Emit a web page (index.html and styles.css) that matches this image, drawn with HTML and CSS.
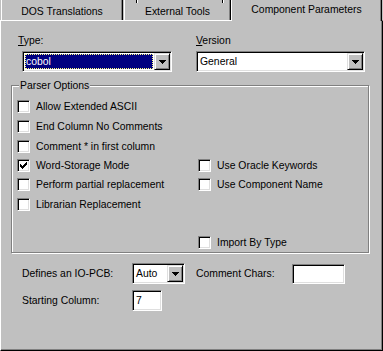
FILE: index.html
```html
<!DOCTYPE html>
<html lang="en">
<head>
    <meta charset="UTF-8">
    <title>Component Parameters</title>
    <link rel="stylesheet" href="styles.css">
</head>
<body>
    <div class="dialog">
        <div class="tabs">
            <div class="tab tab-dos">DOS Translations</div>
            <div class="tab tab-ext">External Tools</div>
            <div class="tab tab-active">Component Parameters</div>
        </div>

        <div class="panel">
            <div class="top-fields">
                <div class="field field-type">
                    <div class="label"><u>T</u>ype:</div>
                    <div class="combo combo-type">
                        <div class="combo-value selected">cobol</div>
                        <div class="combo-btn">
                            <svg width="7" height="4" viewBox="0 0 7 4"><path d="M0 0h7v1h-1v1h-1v1h-1v1h-1v-1h-1v-1h-1v-1h-1z"/></svg>
                        </div>
                    </div>
                </div>
                <div class="field field-version">
                    <div class="label"><u>V</u>ersion</div>
                    <div class="combo combo-version">
                        <div class="combo-value">General</div>
                        <div class="combo-btn">
                            <svg width="7" height="4" viewBox="0 0 7 4"><path d="M0 0h7v1h-1v1h-1v1h-1v1h-1v-1h-1v-1h-1v-1h-1z"/></svg>
                        </div>
                    </div>
                </div>
            </div>

            <!-- Parser Options group -->
            <div class="group">
                <span class="group-title">Parser Options</span>
                <div class="options">
                    <div class="check"><span class="box"></span>Allow Extended ASCII</div>
                    <div class="check"><span class="box"></span>End Column No Comments</div>
                    <div class="check"><span class="box"></span>Comment * in first column</div>
                    <div class="check"><span class="box"><svg width="7" height="7" viewBox="0 0 7 7"><path d="M6 0h1v1h-1zM5 1h2v1h-2zM0 2h1v1h-1zM4 2h3v1h-3zM0 3h2v1h-2zM3 3h3v1h-3zM0 4h5v1h-5zM1 5h3v1h-3zM2 6h1v1h-1z"/></svg></span>Word-Storage Mode</div>
                    <div class="check right row-4"><span class="box"></span>Use Oracle Keywords</div>
                    <div class="check"><span class="box"></span>Perform partial replacement</div>
                    <div class="check right row-5"><span class="box"></span>Use Component Name</div>
                    <div class="check"><span class="box"></span>Librarian Replacement</div>
                    <div class="check right row-8"><span class="box"></span>Import By Type</div>
                </div>
            </div>

            <div class="bottom-fields">
                <div class="label">Defines an IO-PCB:</div>
                <div class="combo combo-auto">
                    <div class="combo-value">Auto</div>
                    <div class="combo-btn">
                        <svg width="7" height="4" viewBox="0 0 7 4"><path d="M0 0h7v1h-1v1h-1v1h-1v1h-1v-1h-1v-1h-1v-1h-1z"/></svg>
                    </div>
                </div>
                <div class="label">Comment Chars:</div>
                <div class="textbox textbox-comment"></div>
                <div class="label">Starting Column:</div>
                <div class="textbox textbox-start">7</div>
            </div>
        </div>
    </div>
</body>
</html>
```

FILE: styles.css
```css
body {
    margin: 0;
    background-color: #c0c0c0;
    font-family: "Liberation Sans", Arial, sans-serif;
    font-size: 10.4px;
    color: #000;
}

.dialog {
    width: 383px;
    height: 351px;
}

/* Tabs */
.tabs {
    display: flex;
    height: 20px;
    padding-left: 1px;
}

.tab {
    box-sizing: border-box;
    height: 20px;
    border-left: 1px solid #fff;
    border-right: 1px solid #000;
    box-shadow: inset -1px 0 #808080;
    text-align: center;
    padding-top: 6px;
    line-height: 12px;
    white-space: nowrap;
}

.tab-dos {
    width: 122px;
}

.tab-ext {
    position: relative;
    width: 107px;
    margin-left: 1px;
}

/* edges of the tab row behind, cut off at the top */
.tab-ext::before,
.tab-ext::after {
    content: "";
    position: absolute;
    top: 0;
    width: 1px;
    height: 3px;
    background-color: #000;
    box-shadow: 1px 0 #fff;
}

.tab-ext::before {
    left: 11px;
}

.tab-ext::after {
    left: 97px;
}

.tab-active {
    width: 151px;
    height: 21px;
    padding-top: 4px;
    position: relative;
    z-index: 1;
    background-color: #c0c0c0;
}

/* Page panel */
.panel {
    box-sizing: border-box;
    height: 331px;
    border-top: 1px solid #fff;
    border-left: 1px solid #fff;
    border-right: 1px solid #000;
    border-bottom: 1px solid #000;
    box-shadow: inset -1px -1px #808080;
    padding-top: 13px;
}

.label {
    line-height: 13px;
    white-space: nowrap;
}

.top-fields {
    display: flex;
    padding-left: 17px;
}

.field-type {
    width: 178px;
}

/* Sunken fields */
.combo,
.textbox,
.box {
    box-sizing: border-box;
    border: 1px solid;
    border-color: #808080 #fff #fff #808080;
    box-shadow: inset 1px 1px #000, inset -1px -1px #dfdfdf;
    background-color: #fff;
}

.combo {
    display: flex;
    height: 21px;
    padding: 1px;
}

.top-fields .combo {
    margin-top: 4px;
}

.combo-type {
    width: 150px;
    margin-left: 4px;
}

.combo-version {
    width: 169px;
}

.combo-value {
    flex: 1;
    margin: 1px;
    padding-left: 1px;
    line-height: 15px;
}

.combo-value.selected {
    background-color: #000080;
    color: #fff;
    outline: 1px dotted #ffff80;
    outline-offset: -1px;
}

.combo-btn {
    box-sizing: border-box;
    width: 16px;
    border: 1px solid;
    border-color: #dfdfdf #000 #000 #dfdfdf;
    box-shadow: inset 1px 1px #fff, inset -1px -1px #808080;
    background-color: #c0c0c0;
    display: flex;
    justify-content: center;
    align-items: center;
}

.combo-btn svg {
    display: block;
}

/* Group box */
.group {
    position: relative;
    box-sizing: border-box;
    width: 358px;
    height: 168px;
    margin: 13px 0 0 10px;
    padding: 10px 0 0 5px;
    border: 1px solid #808080;
    box-shadow: inset 1px 1px #fff, 1px 1px #fff;
}

.group-title {
    position: absolute;
    top: -7px;
    left: 7px;
    padding: 0 1px;
    line-height: 13px;
    background-color: #c0c0c0;
}

.options {
    display: grid;
    grid-template-columns: 181px auto;
    grid-template-rows: 20px 20px 20px 19px 19px 20px 19px 19px;
}

.check {
    grid-column: 1;
    display: flex;
    align-items: center;
    gap: 6px;
    white-space: nowrap;
}

.check.right {
    grid-column: 2;
}

.row-4 { grid-row: 4; }
.row-5 { grid-row: 5; }
.row-8 { grid-row: 8; }

.box {
    width: 13px;
    height: 13px;
    display: flex;
    justify-content: center;
    align-items: center;
}

.box svg {
    display: block;
}

/* Bottom fields */
.bottom-fields {
    display: grid;
    grid-template-columns: 110px 64px 96px auto;
    grid-template-rows: 21px 21px;
    row-gap: 6px;
    margin-top: 10px;
    padding-left: 21px;
    align-items: center;
}

.combo-auto {
    width: 53px;
}

.textbox {
    height: 20px;
    padding: 2px 0 0 3px;
    line-height: 15px;
}

.textbox-comment {
    width: 53px;
}

.textbox-start {
    width: 30px;
    height: 21px;
}
```
